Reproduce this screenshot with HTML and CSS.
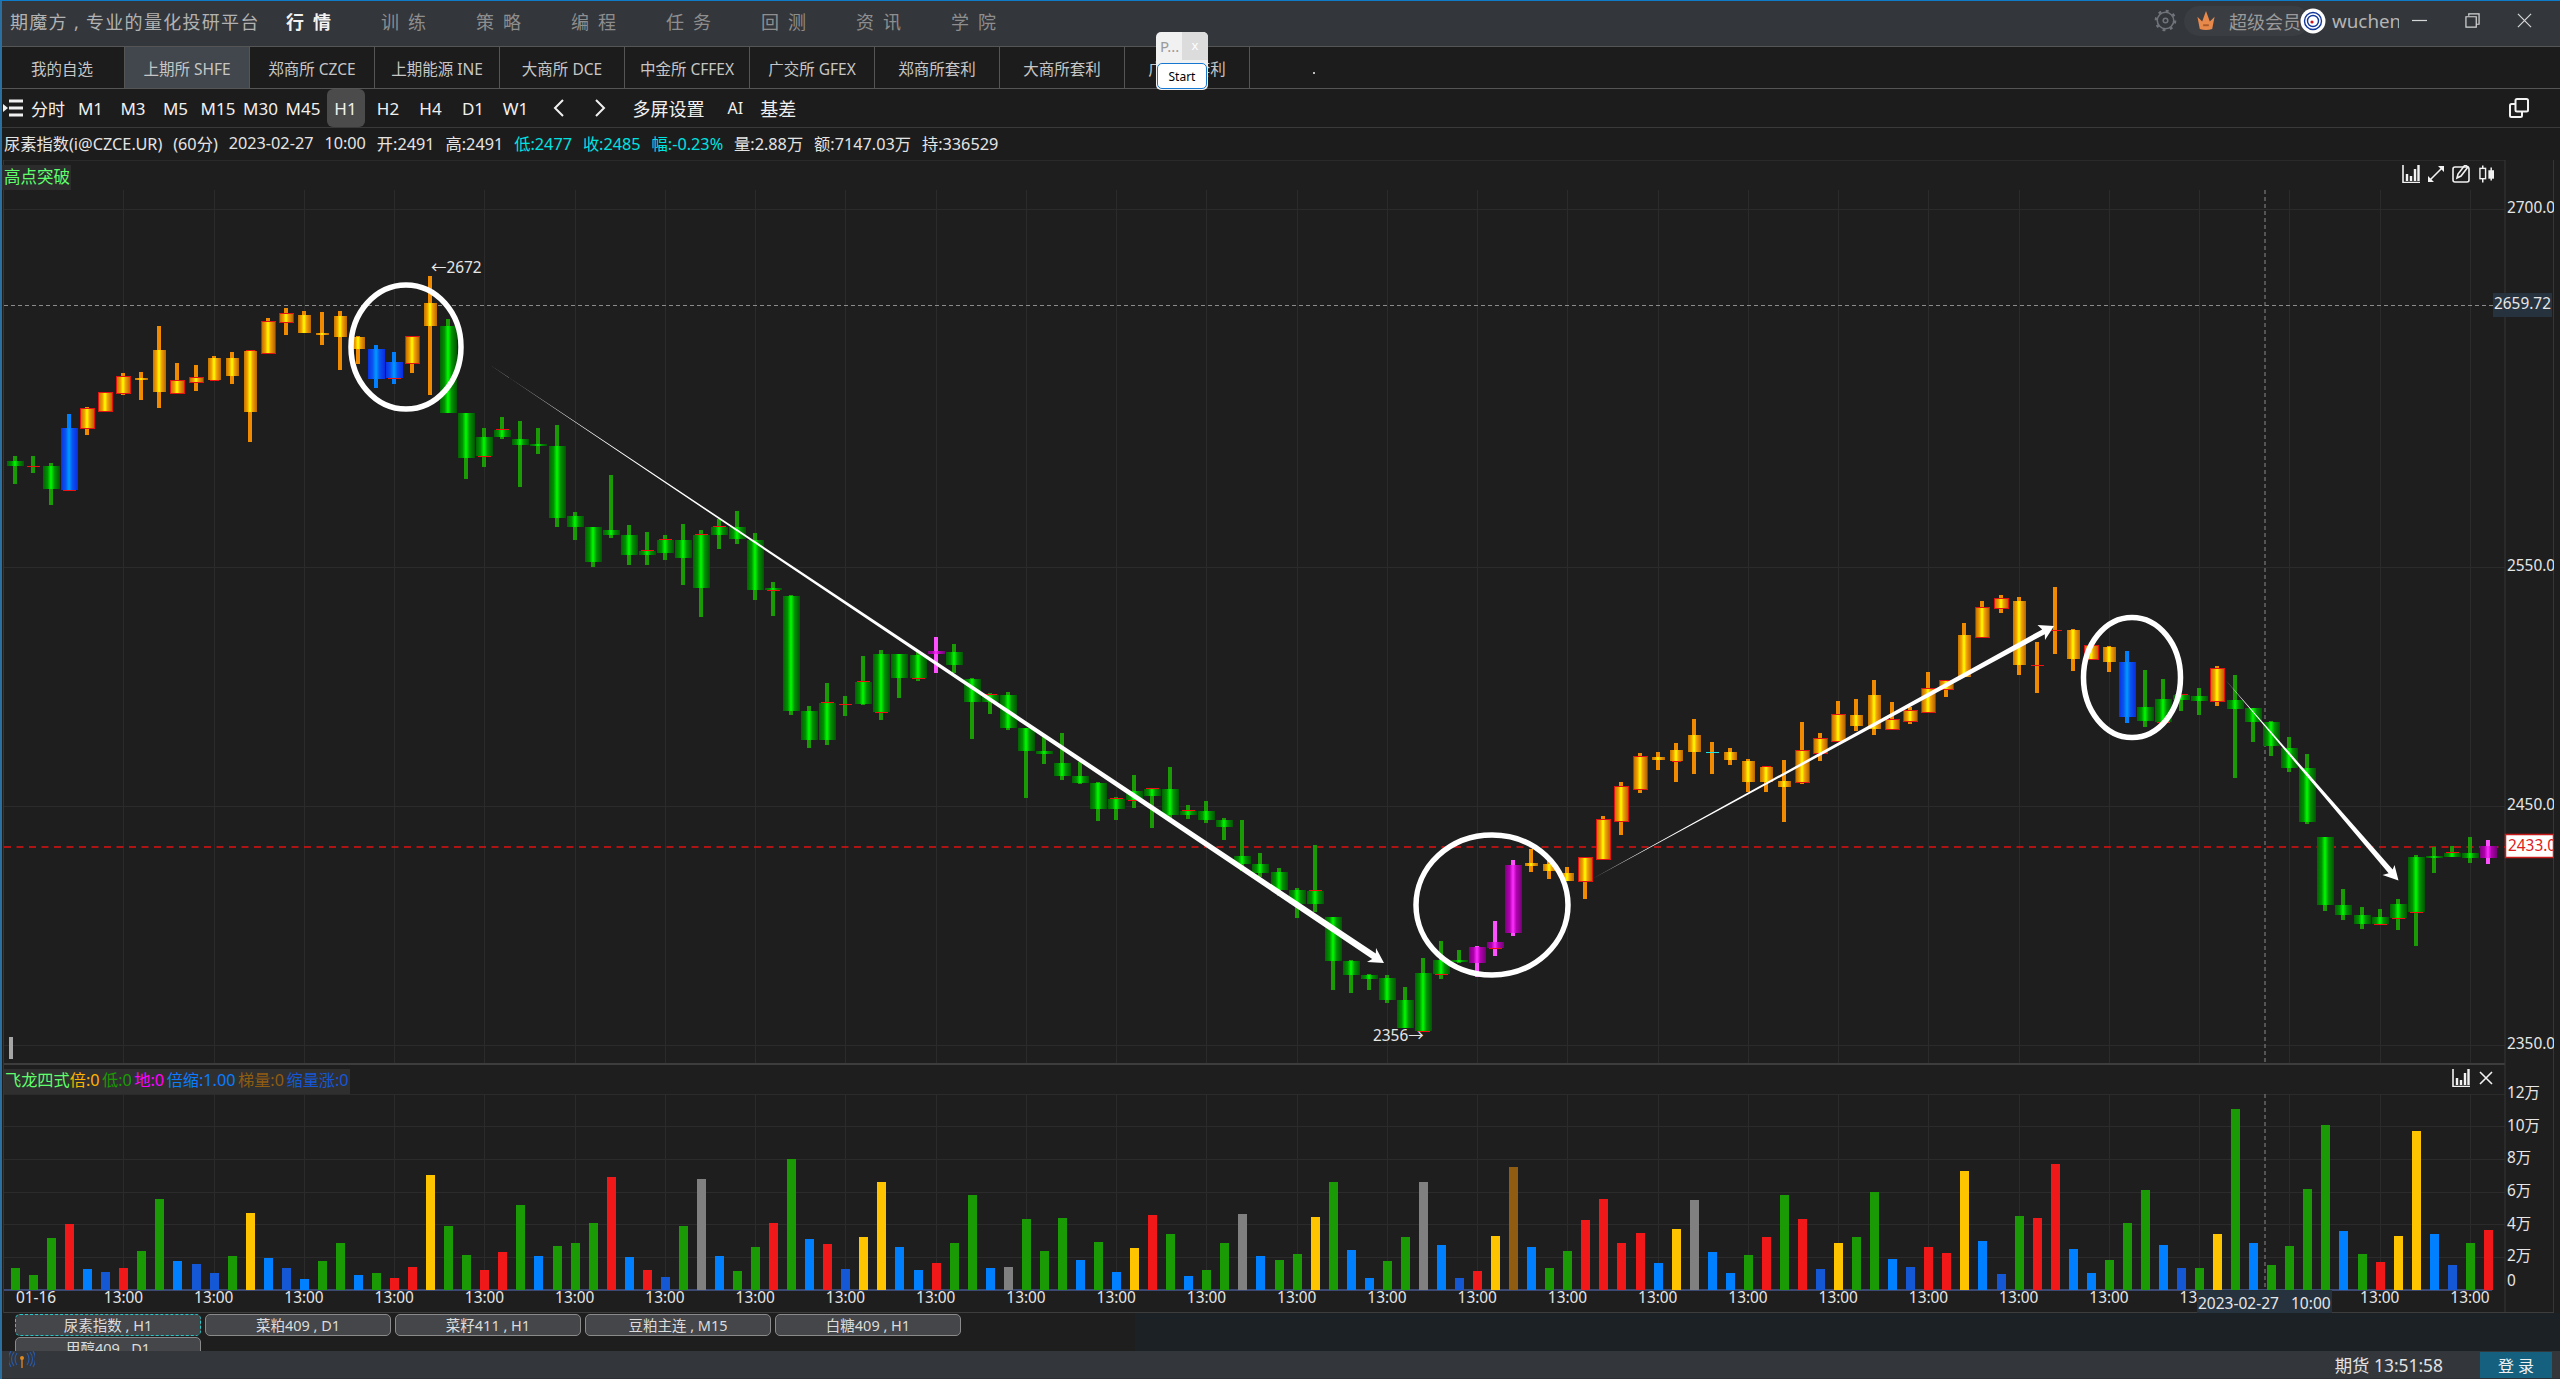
FILE: index.html
```html
<!DOCTYPE html>
<html lang="zh-CN">
<head>
<meta charset="utf-8">
<title>期魔方</title>
<link rel="stylesheet" href="styles.css">
</head>
<body>
<div class="app">
  <header class="titlebar">
    <div class="brand">期魔方 , 专业的量化投研平台</div>
    <nav class="mainnav">
      <a class="mainnav-item is-active">行情</a><a class="mainnav-item">训练</a><a class="mainnav-item">策略</a><a class="mainnav-item">编程</a><a class="mainnav-item">任务</a><a class="mainnav-item">回测</a><a class="mainnav-item">资讯</a><a class="mainnav-item">学院</a>
    </nav>
    <div class="account">
      <svg class="gear" viewBox="0 0 24 24"><circle cx="12" cy="12" r="8.6" class="gear-ring"/><circle cx="12" cy="12" r="10" class="gear-teeth"/><circle cx="12" cy="12" r="2.4" class="gear-ring"/></svg>
      <div class="vip">
        <svg class="crown" viewBox="0 0 20 22"><path class="crown-fill" d="M1 7 L6 12 L10 1 L14 12 L19 7 L16.5 20 Q10 22 3.5 20 Z"/><rect class="crown-bar" x="7" y="15" width="6" height="2"/></svg>
        <span>超级会员</span>
      </div>
      <svg class="avatar" viewBox="0 0 26 26"><circle cx="13" cy="13" r="12.5" class="av-bg"/><circle cx="13" cy="13" r="8.5" class="av-ring"/><circle cx="13" cy="13" r="5.5" class="av-ring"/><circle cx="12" cy="14" r="1.6" class="av-dot"/></svg>
      <span class="username">wuchen</span>
      <button class="winbtn winbtn-min"><svg viewBox="0 0 16 16"><path class="win-stroke" d="M0 8H16"/></svg></button>
      <button class="winbtn winbtn-max"><svg viewBox="0 0 16 16"><path class="win-stroke" d="M4 3V1H15V12H12M1 4H12V15H1Z"/></svg></button>
      <button class="winbtn winbtn-close"><svg viewBox="0 0 16 16"><path class="win-stroke" d="M1 1L15 15M15 1L1 15"/></svg></button>
    </div>
  </header>

  <div class="exchanges">
    <a class="exchange">我的自选</a>
    <a class="exchange is-active">上期所 SHFE</a>
    <a class="exchange">郑商所 CZCE</a>
    <a class="exchange">上期能源 INE</a>
    <a class="exchange">大商所 DCE</a>
    <a class="exchange">中金所 CFFEX</a>
    <a class="exchange">广交所 GFEX</a>
    <a class="exchange">郑商所套利</a>
    <a class="exchange">大商所套利</a>
    <a class="exchange">广交所套利</a>
    <i class="speck"></i>
  </div>

  <div class="periods">
    <svg class="menu-icon" viewBox="0 0 20 18"><path class="menu-bars" d="M6 2H20M6 9H20M6 16H20"/><path class="menu-tip" d="M0 5L5 9L0 13Z"/></svg>
    <a class="period">分时</a><a class="period">M1</a><a class="period">M3</a><a class="period">M5</a><a class="period">M15</a><a class="period">M30</a><a class="period">M45</a><a class="period is-active">H1</a><a class="period">H2</a><a class="period">H4</a><a class="period">D1</a><a class="period">W1</a>
    <a class="period"><svg class="chevron" viewBox="0 0 13 18"><path d="M11 1L3 9L11 17"/></svg></a>
    <a class="period"><svg class="chevron" viewBox="0 0 13 18"><path d="M2 1L10 9L2 17"/></svg></a>
    <a class="period-link period-multi">多屏设置</a>
    <a class="period-link period-ai">AI</a>
    <a class="period-link period-basis">基差</a>
    <svg class="copy-icon" viewBox="0 0 20 20"><rect x="6.5" y="1" width="12.5" height="12.5" rx="1.5" class="copy-line"/><path class="copy-line" d="M6 6H2.5Q1 6 1 7.5V17.5Q1 19 2.5 19H11.5Q13 19 13 17.5V14"/></svg>
  </div>

  <div class="quote">
    <span>尿素指数(i@CZCE.UR)</span><span>(60分)</span><span>2023-02-27</span><span>10:00</span><span>开:2491</span><span>高:2491</span>
    <span class="is-down">低:2477</span><span class="is-down">收:2485</span><span class="is-down">幅:-0.23%</span>
    <span>量:2.88万</span><span>额:7147.03万</span><span>持:336529</span>
  </div>

  <main class="canvas">
    <svg id="chart" class="chart" width="2554" height="1153" viewBox="0 160 2554 1153">
      <defs>
        <linearGradient id="gr-g"><stop offset="0" stop-color="#045a04"/><stop offset=".3" stop-color="#009400"/><stop offset=".5" stop-color="#00ff00"/><stop offset=".7" stop-color="#009400"/><stop offset="1" stop-color="#045a04"/></linearGradient>
        <linearGradient id="gr-o"><stop offset="0" stop-color="#bd6c00"/><stop offset=".3" stop-color="#f2a000"/><stop offset=".5" stop-color="#ffff00"/><stop offset=".7" stop-color="#f2a000"/><stop offset="1" stop-color="#bd6c00"/></linearGradient>
        <linearGradient id="gr-b"><stop offset="0" stop-color="#0a2ee0"/><stop offset=".3" stop-color="#0a55f0"/><stop offset=".5" stop-color="#009cff"/><stop offset=".7" stop-color="#0a55f0"/><stop offset="1" stop-color="#0a2ee0"/></linearGradient>
        <linearGradient id="gr-m"><stop offset="0" stop-color="#780078"/><stop offset=".3" stop-color="#b000b0"/><stop offset=".5" stop-color="#ff30ff"/><stop offset=".7" stop-color="#b000b0"/><stop offset="1" stop-color="#780078"/></linearGradient>
      </defs>
      <g id="grid" class="grid"></g>
      <line class="frame" x1="3" y1="160" x2="2505" y2="160"/>
      <line class="frame-strong" x1="3" y1="1064" x2="2505" y2="1064"/>
      <line class="frame" x1="2505" y1="160" x2="2505" y2="1313"/>
      <line class="frame" x1="2553.5" y1="128" x2="2553.5" y2="1313"/>
      <line class="frame-strong" x1="3" y1="1313" x2="2554" y2="1313"/>
      <line class="frame" x1="3.5" y1="160" x2="3.5" y2="1313"/>
      <line class="dash-cross" x1="2265" y1="190" x2="2265" y2="1064"/>
      <line class="dash-cross" x1="2265" y1="1094" x2="2265" y2="1290"/>
      <line class="dash-cross" x1="4" y1="305.5" x2="2493" y2="305.5"/>
      <line class="dash-last" x1="4" y1="847" x2="2505" y2="847"/>
      <line class="vol-base" x1="4" y1="1290" x2="2492" y2="1290"/>
      <rect class="grip" x="9" y="1037" width="4" height="22"/>
      <g id="volumes" shape-rendering="crispEdges"></g>
      <g id="candles" shape-rendering="crispEdges"></g>
      <g id="marks">
        <ellipse class="ring" cx="406" cy="347" rx="55" ry="62"/>
        <ellipse class="ring" cx="1492" cy="905" rx="76" ry="70"/>
        <ellipse class="ring" cx="2132" cy="677.5" rx="48.5" ry="60"/>
      </g>
      <text class="t-axis" x="431" y="267">←2672</text>
      <text class="t-axis" x="1373" y="1035">2356→</text>
      <g class="t-axis">
        <text x="2507" y="207">2700.0</text>
        <text x="2507" y="565.5">2550.0</text>
        <text x="2507" y="804.5">2450.0</text>
        <text x="2507" y="1043.5">2350.0</text>
        <text x="2507" y="1092">12万</text>
        <text x="2507" y="1125">10万</text>
        <text x="2507" y="1157.5">8万</text>
        <text x="2507" y="1190.5">6万</text>
        <text x="2507" y="1223.5">4万</text>
        <text x="2507" y="1255.5">2万</text>
        <text x="2507" y="1280.5">0</text>
      </g>
      <g id="xaxis" class="t-axis"></g>
      <rect class="tag" x="2493" y="293" width="59" height="24"/>
      <text class="t-axis" x="2494" y="303.5">2659.72</text>
      <rect class="tag-last" x="2505.5" y="834.5" width="48" height="23"/>
      <text class="t-last" x="2508" y="845.5">2433.0</text>
      <rect class="tag" x="2197" y="1290" width="135" height="25"/>
      <text class="t-tip" x="2198" y="1302.5">2023-02-27</text>
      <text class="t-tip" x="2291" y="1302.5">10:00</text>
    </svg>

    <div class="signal">高点突破</div>
    <div class="tools tools-price">
      <svg class="tool" viewBox="0 0 18 18"><path class="tool-line" d="M1 0V17.5H18"/><path class="tool-bars" d="M5 16V9M9 16V11M13 16V4M16.5 16V0"/></svg>
      <svg class="tool" viewBox="0 0 18 18"><path class="tool-line" d="M2 16L16 2"/><path class="tool-fill" d="M11 1H17V7ZM1 11V17H7Z"/></svg>
      <svg class="tool" viewBox="0 0 18 18"><rect class="tool-line" x="1" y="2" width="16" height="15" rx="2"/><path class="tool-line" d="M5 13L6 9L13 0L16 2L9 11Z"/></svg>
      <svg class="tool tool-candle" viewBox="0 0 16 18"><path class="tool-line" d="M4 0V18M13 2V16"/><rect class="tool-box" x="1" y="3" width="6" height="11"/><rect class="tool-solid" x="10" y="5" width="6" height="9"/></svg>
    </div>
    <div class="indicator">
      <span class="c-lime">飞龙四式</span><span class="c-amber">倍:0</span><span class="c-green">低:0</span><span class="c-magenta">地:0</span><span class="c-blue">倍缩:1.00</span><span class="c-brown">梯量:0</span><span class="c-navy">缩量涨:0</span>
    </div>
    <div class="tools tools-volume">
      <svg class="tool" viewBox="0 0 18 18"><path class="tool-line" d="M1 0V17.5H18"/><path class="tool-bars" d="M5 16V9M9 16V11M13 16V4M16.5 16V0"/></svg>
      <svg class="tool tool-x" viewBox="0 0 14 14"><path class="tool-line" d="M1 1L13 13M13 1L1 13"/></svg>
    </div>
  </main>

  <div class="workspaces">
    <a class="workspace is-focus">尿素指数 , H1</a>
    <a class="workspace">菜粕409 , D1</a>
    <a class="workspace">菜籽411 , H1</a>
    <a class="workspace">豆粕主连 , M15</a>
    <a class="workspace">白糖409 , H1</a>
    <a class="workspace">甲醇409 , D1</a>
  </div>

  <footer class="statusbar">
    <svg class="antenna" viewBox="0 0 26 18"><path class="antenna-wave" d="M8 2Q4 8 8 14M5 1Q0 8 5 15M2 0Q-3 8 2 16M18 2Q22 8 18 14M21 1Q26 8 21 15M24 0Q29 8 24 16"/><path class="antenna-mast" d="M13 7V17"/><circle class="antenna-dot" cx="13" cy="7" r="2"/></svg>
    <span class="clock">期货 13:51:58</span>
    <button class="login">登 录</button>
  </footer>

  <div class="popup">
    <div class="popup-head"><span class="popup-title">P...</span><span class="popup-close">x</span></div>
    <button class="popup-start">Start</button>
  </div>
</div>
<script src="chart.js"></script>
</body>
</html>
```

FILE: styles.css
```css
* { box-sizing: border-box; }
html, body { margin: 0; padding: 0; background: #1e1e1e; overflow: hidden; }
body { font-family: "Noto Sans", "Noto Sans CJK SC", sans-serif; color: #ddd; }
a { display: block; }
button { font-family: inherit; border: 0; padding: 0; background: none; }

.app {
  position: relative;
  width: 2560px;
  height: 1379px;
  display: flex;
  flex-direction: column;
  border-top: 1px solid #0f7cc9;
  background: #2c2f34;
  overflow: hidden;
}
.app::after {
  content: "";
  position: absolute;
  left: 0;
  top: 0;
  bottom: 0;
  width: 2px;
  background: #2a6f9f;
}

/* title bar */
.titlebar { flex: 0 0 45px; display: flex; align-items: center; background: #33363b; padding: 0 19px 6px 10px; }
.brand { width: 276px; font-size: 18px; letter-spacing: 1.3px; color: #b2b2b2; white-space: nowrap; }
.mainnav { display: flex; }
.mainnav-item { width: 95px; font-size: 18px; letter-spacing: 9px; color: #8e8e8e; white-space: nowrap; }
.mainnav-item.is-active { color: #f2f2f2; font-weight: 700; }
.account { margin-left: auto; display: flex; align-items: center; }
.gear { width: 23px; height: 23px; margin-right: 7px; }
.gear-ring { fill: none; stroke: #70737a; stroke-width: 1.6; }
.gear-teeth { fill: none; stroke: #70737a; stroke-width: 2.6; stroke-dasharray: 3 4.85; }
.vip { width: 125px; height: 30px; display: flex; align-items: center; padding-left: 12px; background: #3a3d42; border-radius: 15px; font-size: 18px; color: #9a9a9a; white-space: nowrap; }
.vip span { margin-left: 13px; }
.crown { width: 20px; height: 21px; }
.crown-fill { fill: #e8894c; }
.crown-bar { fill: #a85a2a; }
.avatar { width: 26px; height: 26px; margin-left: -9px; position: relative; }
.av-bg { fill: #fff; }
.av-ring { fill: none; stroke: #13379a; stroke-width: 1.4; }
.av-dot { fill: #d3121b; }
.username { width: 67px; margin: 0 2px 0 6px; overflow: hidden; font-size: 18.8px; color: #b4b4b4; white-space: nowrap; }
.winbtn { height: 30px; display: flex; align-items: center; justify-content: center; }
.winbtn svg { width: 15px; height: 15px; }
.winbtn-min { width: 36px; }
.winbtn-max { width: 70px; }
.winbtn-close { width: 34px; }
.win-stroke { fill: none; stroke: #d6d6d6; stroke-width: 1.3; }

/* exchange tabs */
.exchanges { position: relative; flex: 0 0 43px; display: flex; background: #1c1c1c; border-top: 1px solid #555; border-bottom: 1px solid #555; }
.exchange { width: 125px; height: 41px; line-height: 44px; text-align: center; font-size: 15.5px; color: #c6c6c6; border-right: 1px solid #555; white-space: nowrap; }
.exchange.is-active { background: #41474c; }
.speck { display: block; width: 2px; height: 2px; margin: 25px 0 0 63px; background: #bbb; }

/* periods */
.periods { flex: 0 0 39px; display: flex; align-items: center; gap: 4.5px; padding-left: 3px; background: #1c1c1c; border-bottom: 1px solid #3a3a3a; }
.menu-icon { width: 20px; height: 18px; margin-right: 1.5px; }
.menu-bars { stroke: #f0f0f0; stroke-width: 3; fill: none; }
.menu-tip { fill: #f0f0f0; }
.period { width: 38px; height: 38px; display: flex; align-items: center; justify-content: center; font-size: 17px; color: #f0f0f0; white-space: nowrap; }
.period.is-active { background: #4b4b4b; border-radius: 6px; }
.chevron { width: 13px; height: 18px; fill: none; stroke: #f0f0f0; stroke-width: 2; }
.period-link { font-size: 18px; color: #f0f0f0; white-space: nowrap; }
.period-multi { margin-left: 8.5px; }
.period-ai { margin-left: 18.5px; font-size: 16px; }
.period-basis { margin-left: 12.5px; }
.copy-icon { width: 20px; height: 20px; margin-left: auto; margin-right: 31px; }
.copy-line { fill: none; stroke: #f2f2f2; stroke-width: 2; }

/* quote line */
.quote { flex: 0 0 32px; display: flex; align-items: center; gap: 10.9px; padding: 0 0 2px 4px; background: #1c1c1c; font-size: 16.25px; color: #e4e4e4; white-space: nowrap; }
.quote .is-down { color: #00e2e2; }

/* chart */
.canvas { position: relative; flex: 0 0 1153px; background: #1e1e1e; }
.chart { display: block; font-family: "Noto Sans", "Noto Sans CJK SC", sans-serif; }
.grid line { stroke: #2b2b2b; stroke-width: 1; }
.frame { stroke: #363636; stroke-width: 1; }
.frame-strong { stroke: #3d3d3d; stroke-width: 2; }
.dash-cross { stroke: #8a8a8a; stroke-width: 1; stroke-dasharray: 4 3; }
.dash-last { stroke: #e01212; stroke-width: 1.3; stroke-dasharray: 7 5.5; }
.vol-base { stroke: #47598f; stroke-width: 1.5; }
.grip { fill: #a6a6a6; }
.ring { fill: none; stroke: #fff; stroke-width: 5.5; }
.arrow { fill: #fff; }
.t-axis text, text.t-axis { font-size: 15.4px; fill: #e6e6e6; dominant-baseline: central; }
.t-last { font-size: 15.4px; fill: #e02020; dominant-baseline: central; }
.t-tip { font-size: 15.5px; fill: #e6e6e6; dominant-baseline: central; }
.tag { fill: #27323f; }
.tag-last { fill: #fff; stroke: #c81c1c; stroke-width: 1.5; }

.signal { position: absolute; left: 2px; top: 5px; width: 69px; height: 25px; line-height: 24px; padding-left: 2px; background: #2c2c2c; font-size: 16.5px; color: #5fff6c; white-space: nowrap; }
.tools { position: absolute; display: flex; align-items: center; }
.tools-price { left: 2402px; top: 5px; gap: 7px; }
.tools-volume { left: 2452px; top: 909px; gap: 9px; }
.tool { width: 18px; height: 18px; }
.tool-candle { margin-left: 2px; width: 15px; }
.tool-x { width: 14px; height: 14px; }
.tool-line { fill: none; stroke: #f2f2f2; stroke-width: 1.6; }
.tool-bars { fill: none; stroke: #f2f2f2; stroke-width: 2.4; }
.tool-fill { fill: #f2f2f2; }
.tool-box { fill: #1e1e1e; stroke: #f2f2f2; stroke-width: 1.5; }
.tool-solid { fill: #f2f2f2; }
.indicator { position: absolute; left: 4px; top: 909px; height: 25px; width: 346px; display: flex; align-items: center; gap: 2.5px; padding: 0 0 6px 1px; background: #2f2f2f; font-size: 16.2px; white-space: nowrap; }
.c-lime { color: #5fff6c; margin-right: -2.5px; }
.c-amber { color: #ffb400; }
.c-green { color: #1a9a05; }
.c-magenta { color: #ff00ff; }
.c-blue { color: #0a7cff; }
.c-brown { color: #8f5c12; }
.c-navy { color: #1558d6; }

/* workspace buttons */
.workspaces { flex: 0 0 38px; width: 100%; overflow: hidden; background: linear-gradient(90deg, #1e1e1e 1135px, #1c2126 1135px); padding: 1px 0 0 15px; display: flex; flex-wrap: wrap; align-content: flex-start; gap: 1px 4px; padding-right: 1585px; }
.workspace { width: 186px; height: 22px; line-height: 21px; text-align: center; font-size: 14.5px; color: #dcdcdc; background: #444649; border: 1px solid #8a8a8a; border-radius: 5px; white-space: nowrap; }
.workspace.is-focus { border: 1px dashed #27c8c8; }

/* status bar */
.statusbar { flex: 0 0 27px; display: flex; align-items: center; background: #33363b; padding: 0 8px 0 9px; position: relative; }
.antenna { width: 26px; height: 18px; margin-top: -9px; }
.antenna-wave { fill: none; stroke: #2b5aa8; stroke-width: 1.1; }
.antenna-mast { stroke: #d98028; stroke-width: 1.4; }
.antenna-dot { fill: #e08a20; }
.clock { margin-left: auto; margin-right: 37px; font-size: 17.4px; color: #e2e2e2; white-space: nowrap; }
.login { width: 72px; height: 26px; padding-top: 1px; background: #15607f; font-size: 16px; color: #f0f0f0; }

/* floating widget */
.popup { position: absolute; left: 1156px; top: 31px; width: 52px; height: 58px; background: #f1f1f1; border-radius: 5px; overflow: hidden; }
.popup-head { height: 28px; display: flex; }
.popup-title { flex: 1; padding-left: 4px; font-size: 15px; line-height: 28px; color: #9a9a9a; }
.popup-close { width: 26px; background: #dcdcdc; text-align: center; font-size: 13px; line-height: 26px; color: #fff; }
.popup-start { display: block; width: 50px; height: 26px; margin: 3px 0 0 1px; background: #fff; border: 1.5px solid #1577d0; border-radius: 5px; font-size: 12px; color: #000; }
```

FILE: chart.js
```js
const NS = 'http://www.w3.org/2000/svg';
const STEP = 18.05, X0 = 15;
const cxOf = i => Math.round(X0 + STEP * i);
function el(parent, name, attrs, text) {
  const n = document.createElementNS(NS, name);
  for (const k in attrs) n.setAttribute(k, attrs[k]);
  if (text) n.textContent = text;
  parent.appendChild(n);
  return n;
}
const rect = (p, x, y, w, h, fill) => el(p, 'rect', { x, y, width: w, height: h, fill });

/* grid */
const grid = document.getElementById('grid');
[209.5, 567.5, 806.5, 1045.5, 1094.5, 1126.5, 1159.5, 1192.5, 1224.5, 1257.5].forEach(y =>
  el(grid, 'line', { x1: 4, x2: 2505, y1: y, y2: y }));
for (let k = 0; k <= 26; k++) {
  const x = Math.round(123.3 + 90.25 * k) + 0.5;
  el(grid, 'line', { x1: x, x2: x, y1: 190, y2: 1064 });
  el(grid, 'line', { x1: x, x2: x, y1: 1094, y2: 1290 });
}

/* x axis */
const xaxis = document.getElementById('xaxis');
el(xaxis, 'text', { x: 36, y: 1297.5, 'text-anchor': 'middle' }, '01-16');
for (let k = 0; k <= 26; k++) {
  el(xaxis, 'text', { x: 123.5 + 90.25 * k, y: 1297.5, 'text-anchor': 'middle' }, '13:00');
}

/* volumes: colour letter + top as read from the reference */
const VOL_COLORS = { g: '#1a9a05', r: '#f01818', B: '#0080ff', D: '#1558d6', y: '#ffc400', a: '#808080', n: '#8f5c12' };
const volumes = [
  [1050, 'g654 g675 g564 r522 B657 D666 r654 g603 g447 B633 D642 D669 g618 y489 B624 D654 B687 g633 g579 B675 g669 r684 r651 y375 g528 g615 r660 r606 g465 B618 g588 g579 g519 r381 B621 r660 D681 g528 a387 B618 g663 g591 r519 g327 B567 r582 D657 y561 y396 B591 B660 r639 g579 g435 B654'],
  [1100, 'a501 g357 g453 g354 B480 g426 B516 y444 r345 g402 B528 g510 g429 a342 B468 g480 g462 y351 g246 B450 B534 g483 g411 a246 B435 D534 r513 y408 n201 B441 g504 g453 r360 r297 r429 r399 B489 y387 a300 B456 B519 g465 r411 g285 r357 D507 y429 g411 g276 B477'],
  [1040, 'D681 r621 r639 y393 B603 D702 g528 r534 r372 B627 B699 g660 g549 g450 B615 D684 g684 y582 g207 B609 g675 g618 g447 g255 B573 g642 r666 y588 y273 B582 D675 g609 r570']
];
const volG = document.getElementById('volumes');
let vi = 0;
volumes.forEach(([off, s]) => s.split(' ').forEach(tok => {
  const top = Math.round(off + Number(tok.slice(1)) / 3);
  rect(volG, cxOf(vi) - 4, top, 9, 1290 - top, VOL_COLORS[tok[0]]);
  vi++;
}));

/* candles: type, high, body top, body bottom, low, flag */
function seg(off, div, text) {
  return text.trim().split('\n').map(line => {
    const [t, h, a, b, l, f] = line.trim().split(',');
    return { t, h: off + h / div, a: off + a / div, b: off + b / div, l: off + l / div, f: f || '' };
  });
}
const candles = [].concat(
  seg(240, 3, `g,648,663,678,732
g,648,679,681,700,L
g,668,678,747,795
b,522,563,750,750,B
o,501,508,564,585,R
o,456,459,513,513,R
o,399,412,459,465,R
o,396,414,419,480
o,258,330,456,504
o,369,424,459,459,R
o,375,414,426,453,R
o,348,354,420,420,B
o,335,354,408,432
o,333,334,516,606,T
o,234,246,339,339,R
o,204,223,246,285,R
o,213,225,279,279
o,216,279,282,315
o,213,228,291,390
o,289,291,327,372
b,315,327,417,444
b,336,366,414,432,B
o,288,291,369,399,R
o,108,189,258,465
g,237,258,519,519
g,519,519,654,717
g,564,591,648,680,B
g,531,570,592,597,T
g,542,597,615,741
g,564,612,618,642
g,556,618,834,861
g,816,828,861,900
g,861,861,966,980
g,706,870,885,894
g,855,885,945,976`),
  seg(480, 3, `g,156,214,225,255,T
g,165,180,219,240,T
g,131,180,234,315
g,150,165,324,411,T
g,118,141,165,207,T
g,92,141,177,192
g,160,180,330,360
g,306,325,331,408,B
g,346,348,693,705
g,677,693,780,804
g,609,670,780,795,T
g,648,672,675,708,L
g,528,605,672,675,T
g,510,522,696,720,B
g,522,522,594,653
g,516,525,594,603,B
m,471,514,521,579
g,492,516,555,580
g,595,597,666,777
g,639,645,666,702,T
g,636,645,744,749
g,744,744,813,955
g,770,813,821,852
g,759,849,888,899
g,845,888,909,913`),
  seg(0, 1, `g,782,783,809,821
g,797,799,809,820,T
g,775,791,800,808,B
g,788,789,796,828,T
g,767,789,815,820
g,805,811,815,819,T
g,801,811,820,823
g,818,820,827,840
g,820,856,864,871
g,853,864,873,877
g,868,872,890,896`),
  seg(700, 3, `g,564,570,612,655
g,435,574,612,636,T
g,651,651,783,870
g,780,783,825,880
g,822,825,837,870
g,826,834,900,909
g,860,900,984,984
g,774,819,993,996,B
g,723,780,821,837,B
g,750,780,783,789
m,738,742,789,830
m,663,726,743,768,B
m,480,496,699,708
o,447,490,498,516
o,480,492,513,537
o,501,519,543,543
o,471,475,543,597,R
o,348,360,476,476,R
o,246,262,363,405,R
o,159,171,266,279,R
o,156,171,180,210
o,129,150,183,246,B
o,57,105,156,222
o,126,156,158,222,C
o,144,156,180,195
o,177,183,246,276
o,198,201,246,276,T
o,180,243,261,366
o,66,154,246,252,R
o,99,117,159,183,R
o,3,45,122,122,R`),
  seg(0, 1, `o,699,715,726,731
o,680,695,729,735
o,702,720,729,730,R`),
  seg(560, 3, `o,440,453,483,492,R
o,336,387,456,456,R
o,361,364,387,411,R
o,189,226,350,350
o,123,144,231,231,R
o,105,118,144,159,R
o,111,123,315,345
o,246,316,318,399,L
o,81,210,212,282,L
o,208,210,297,333
o,258,258,298,300,R
o,258,261,306,336
b,273,306,471,490
g,330,441,483,501
g,357,417,486,486,B
g,405,406,420,453,T
g,384,408,423,465
o,318,328,423,438,R
g,344,420,447,655
g,444,444,486,547
g,484,486,558,588
g,531,564,624,637
g,582,624,786,792
g,830,831,1035,1053
g,987,1035,1065,1080
g,1042,1065,1092,1107
g,1047,1071,1092,1095,B
g,1017,1032,1074,1110,B
g,885,891,1057,1158,B
g,860,888,890,939
g,858,878,891,891,T
g,830,879,894,909
m,840,858,894,912`)
);
const WICK = { g: '#1a9a05', o: '#f08a00', b: '#0080ff', m: '#ff50ff' };
const RED = '#f01010';
const candleG = document.getElementById('candles');
candles.forEach((c, i) => {
  const cx = cxOf(i);
  const w = c.t === 'o' ? 13 : 17;
  const x = cx - (w - 1) / 2 - 0.5;
  const top = Math.round(c.a), bot = Math.round(c.b);
  const h = Math.max(bot - top, 2);
  rect(candleG, cx - 2, Math.round(c.h), 4, Math.round(c.l) - Math.round(c.h), WICK[c.t]);
  if (c.f === 'L') { rect(candleG, cx - 6, top, 13, 1, RED); return; }
  if (c.f === 'C') { rect(candleG, cx - 6, top, 13, 1, '#19e6e6'); return; }
  if (c.f === 'R') rect(candleG, x - 1, top - 1, w + 2, h + 2, '#e01414');
  rect(candleG, x, top, w, h, 'url(#gr-' + c.t + ')');
  if (c.f === 'T') rect(candleG, x + 2, top - 1, w - 4, 1, RED);
  if (c.f === 'B') rect(candleG, x + 2, top + h, w - 4, 1, RED);
});

/* hand-drawn trend arrows: tail, tip, two head corners, shaft width */
function arrow(x0, y0, tx, ty, p1, p2, width) {
  const len = Math.hypot(tx - x0, ty - y0);
  const ux = (tx - x0) / len, uy = (ty - y0) / len;
  const nx = tx - ux * 12, ny = ty - uy * 12;
  const px = -uy * width / 2, py = ux * width / 2;
  const pts = [
    [x0, y0], [nx + px, ny + py], p2, [tx, ty], p1, [nx - px, ny - py]
  ].map(p => p[0].toFixed(1) + ',' + p[1].toFixed(1)).join(' ');
  el(document.getElementById('marks'), 'polygon', { class: 'arrow', points: pts });
}
arrow(490, 365, 1384, 963, [1376, 948], [1367, 962], 6.5);
arrow(1592, 879, 2054, 626, [2037.5, 625], [2045, 640], 5.5);
arrow(2226, 680.5, 2398.5, 880.5, [2394.5, 865], [2382.5, 875], 5.5);
```
